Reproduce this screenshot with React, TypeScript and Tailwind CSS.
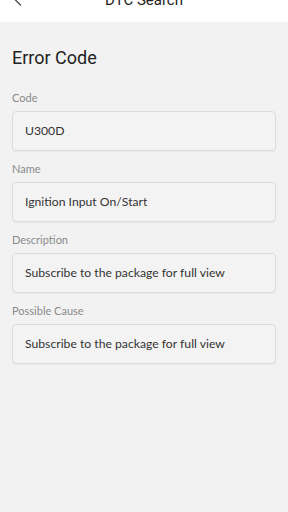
import { ChevronLeft } from 'lucide-react';

const fields = [
  { label: 'Code', value: 'U300D' },
  { label: 'Name', value: 'Ignition Input On/Start' },
  { label: 'Description', value: 'Subscribe to the package for full view' },
  { label: 'Possible Cause', value: 'Subscribe to the package for full view' },
];

export default function App() {
  return (
    <div className="w-[288px] h-[512px] bg-[#f2f2f2] overflow-hidden" style={{ fontFamily: 'Roboto, "Open Sans", sans-serif' }}>
      {/* header, scrolled so the top is cut off */}
      <div className="h-[22px] bg-white overflow-hidden">
        <div className="relative flex items-center justify-center h-[24px] -mt-[12px]">
          <ChevronLeft className="absolute left-[8px] w-5 h-5 text-[#444]" strokeWidth={1.5} />
          <span className="text-[15px] text-[#222]">DTC Search</span>
        </div>
      </div>

      <div className="px-3 pt-[24px]">
        <h1 className="text-[18px] leading-[24px] text-[#222]">Error Code</h1>
        <div className="mt-[20px] flex flex-col gap-[10px]">
          {fields.map((f) => (
            <div key={f.label}>
              <div className="font-['Lato',sans-serif] text-[11px] leading-[16px] text-[#8a8a8a]">{f.label}</div>
              <div className="mt-[5px] h-[40px] flex items-center px-3 rounded-[4px] border border-[#dcdcdc] bg-[#f3f3f3] shadow-[0_1px_1px_rgba(0,0,0,0.04)]">
                <span className="font-['Lato',sans-serif] text-[12.2px] text-[#333]">{f.value}</span>
              </div>
            </div>
          ))}
        </div>
      </div>
    </div>
  );
}
